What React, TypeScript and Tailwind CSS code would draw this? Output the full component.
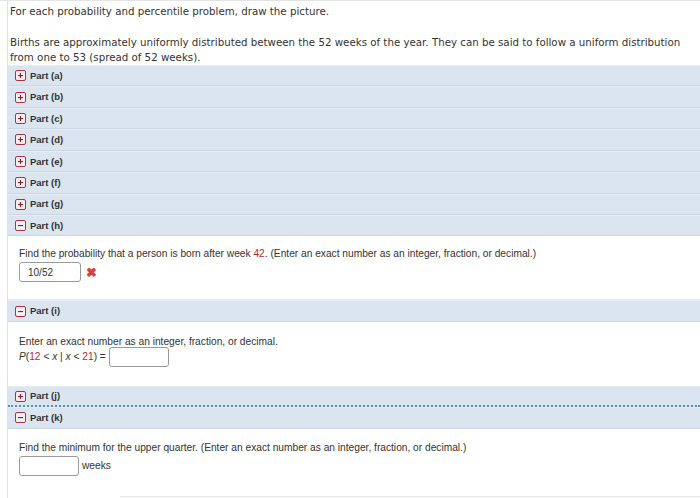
import React from "react";

const Icon = ({ open }: { open?: boolean }) => (
  <svg width="11" height="11" viewBox="0 0 11 11" className="shrink-0">
    <rect x="0.5" y="0.5" width="10" height="10" rx="1.5" fill="#f7eef0" stroke="#a8344a" strokeWidth="1" />
    <rect x="3" y="5" width="5" height="1.1" fill="#8e1f33" />
    {!open && <rect x="4.95" y="3" width="1.1" height="5" fill="#8e1f33" />}
  </svg>
);

const Header = ({ label, open, dotted }: { label: string; open?: boolean; dotted?: boolean }) => (
  <div
    className={`flex items-center gap-[4px] pl-[7px] h-[21.43px] bg-[#dae5ef] border-t border-t-[#e6edf4] ${
      dotted ? "border-b-2 border-b-[#5b8fc0]" : "border-b border-b-[#cbd8e4]"
    }`}
    style={dotted ? { borderBottomStyle: "dotted" } : undefined}
  >
    <Icon open={open} />
    <span className="font-bold text-[9.5px] text-[#333] leading-none" style={{ fontFamily: '"Liberation Sans", Arial, sans-serif' }}>
      {label}
    </span>
  </div>
);

const Input = ({ value, w }: { value?: string; w: string }) => (
  <div className={`${w} h-[20px] border border-[#9a9a9a] rounded-[3px] bg-white flex items-center pl-[8px] text-[10px] text-[#333]`}>
    {value}
  </div>
);

export default function App() {
  const arial = { fontFamily: '"Liberation Sans", Arial, sans-serif' };
  return (
    <div className="w-[700px] h-[498px] bg-white overflow-hidden border-t border-[#e4e4e4]">
      <div className="ml-[7px] border-l border-[#e0e0e0] h-full">
        <div className="pl-[2px] pt-[3px] text-[10.25px] leading-[15px] text-[#333]" style={{ fontFamily: '"DejaVu Sans", Verdana, sans-serif' }}>
          <p>For each probability and percentile problem, draw the picture.</p>
          <p className="mt-[16px]">
            Births are approximately uniformly distributed between the 52 weeks of the year. They can be said to follow a uniform distribution
            from one to 53 (spread of 52 weeks).
          </p>
        </div>
        <div>
          <Header label="Part (a)" />
          <Header label="Part (b)" />
          <Header label="Part (c)" />
          <Header label="Part (d)" />
          <Header label="Part (e)" />
          <Header label="Part (f)" />
          <Header label="Part (g)" />
          <Header label="Part (h)" open />
          <div className="h-[64px] pl-[11px] pt-[12px] text-[10.2px] text-[#333] border-b border-[#e3e9ef]" style={arial}>
            <p className="leading-[12px]">
              Find the probability that a person is born after week <span className="text-[#c0262b]">42</span>. (Enter an exact number as an integer, fraction, or decimal.)
            </p>
            <div className="flex items-center gap-[5px] mt-[2px]">
              <Input value="10/52" w="w-[62px]" />
              <span className="text-[#e0393e] text-[13px] font-bold leading-none">✖</span>
            </div>
          </div>
          <Header label="Part (i)" open />
          <div className="h-[64px] pl-[11px] pt-[14px] text-[10.2px] text-[#333]" style={arial}>
            <p className="leading-[12px]">Enter an exact number as an integer, fraction, or decimal.</p>
            <div className="flex items-center gap-[3px] mt-[-1px]">
              <span>
                <i>P</i>(<span className="text-[#c0262b]">12</span> &lt; <i>x</i> | <i>x</i> &lt; <span className="text-[#c0262b]">21</span>) =
              </span>
              <Input w="w-[60px]" />
            </div>
          </div>
          <Header label="Part (j)" dotted />
          <Header label="Part (k)" open />
          <div className="h-[67px] pl-[11px] pt-[13px] text-[10.2px] text-[#333]" style={arial}>
            <p className="leading-[12px]">Find the minimum for the upper quarter. (Enter an exact number as an integer, fraction, or decimal.)</p>
            <div className="flex items-center gap-[3px] mt-[2px]">
              <Input w="w-[60px]" />
              <span>weeks</span>
            </div>
          </div>
          <div className="ml-[112px] border-t border-[#e6e6e6]" />
        </div>
      </div>
    </div>
  );
}
